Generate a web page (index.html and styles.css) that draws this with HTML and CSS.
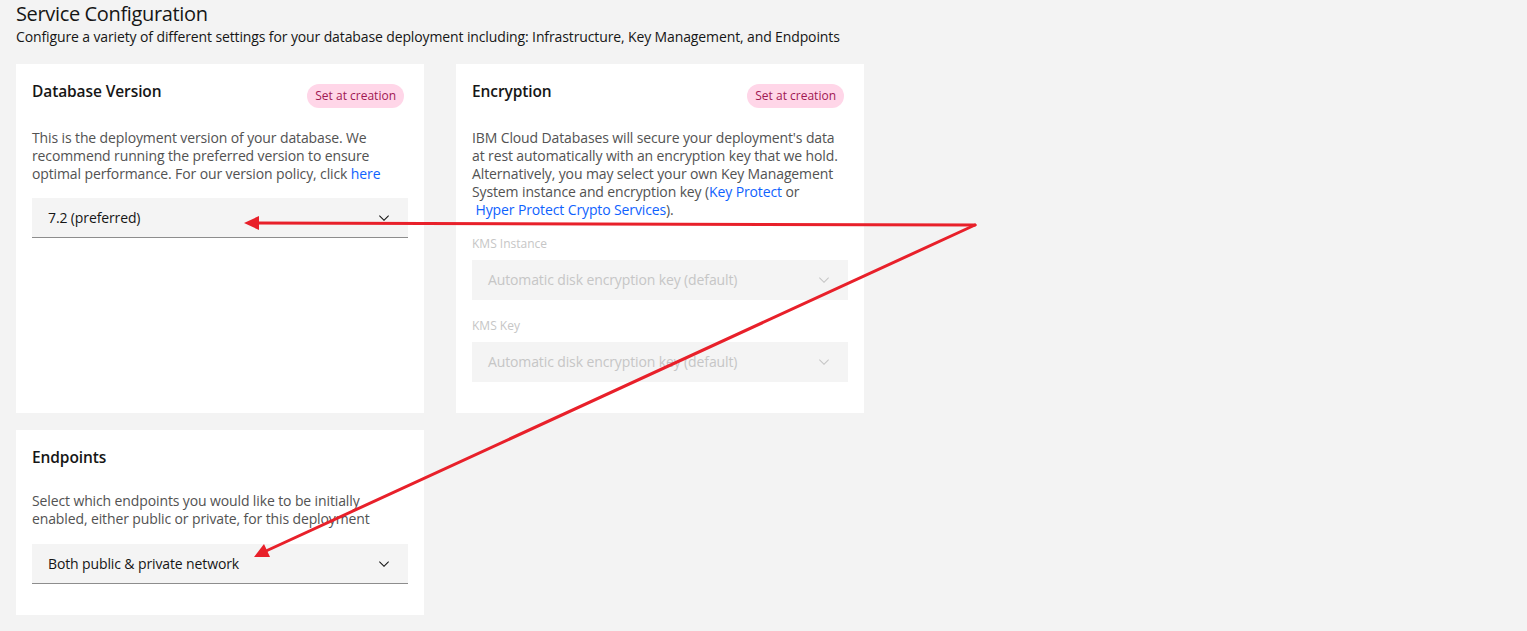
FILE: index.html
```html
<!DOCTYPE html>
<html lang="en">
<head>
<meta charset="utf-8">
<title>Service Configuration</title>
<link rel="stylesheet" href="styles.css">
</head>
<body>
<main class="page">
  <header class="page-header">
    <h1 class="page-title">Service Configuration</h1>
    <p class="page-subtitle">Configure a variety of different settings for your database deployment including: Infrastructure, Key Management, and Endpoints</p>
  </header>

  <div class="grid">
    <section class="card">
      <div class="card-head">
        <h2 class="card-title">Database Version</h2>
        <span class="tag">Set at creation</span>
      </div>
      <p class="card-desc">This is the deployment version of your database. We recommend running the preferred version to ensure optimal performance. For our version policy, click <a class="link" href="#">here</a></p>
      <div class="dropdown">
        <span class="dropdown-text">7.2 (preferred)</span>
        <svg class="chevron" viewBox="0 0 16 16" width="16" height="16"><path d="M8 11L3 6 3.7 5.3 8 9.6 12.3 5.3 13 6z"/></svg>
      </div>
    </section>

    <section class="card">
      <div class="card-head">
        <h2 class="card-title">Encryption</h2>
        <span class="tag">Set at creation</span>
      </div>
      <p class="card-desc">IBM Cloud Databases will secure your deployment's data at rest automatically with an encryption key that we hold. Alternatively, you may select your own Key Management System instance and encryption key (<a class="link" href="#">Key Protect</a> or<br><a class="link" href="#">&nbsp;Hyper Protect Crypto Services</a>).</p>
      <label class="field-label">KMS Instance</label>
      <div class="dropdown disabled">
        <span class="dropdown-text">Automatic disk encryption key (default)</span>
        <svg class="chevron" viewBox="0 0 16 16" width="16" height="16"><path d="M8 11L3 6 3.7 5.3 8 9.6 12.3 5.3 13 6z"/></svg>
      </div>
      <label class="field-label">KMS Key</label>
      <div class="dropdown disabled">
        <span class="dropdown-text">Automatic disk encryption key (default)</span>
        <svg class="chevron" viewBox="0 0 16 16" width="16" height="16"><path d="M8 11L3 6 3.7 5.3 8 9.6 12.3 5.3 13 6z"/></svg>
      </div>
    </section>

    <section class="card">
      <div class="card-head no-tag">
        <h2 class="card-title">Endpoints</h2>
      </div>
      <p class="card-desc">Select which endpoints you would like to be initially enabled, either public or private, for this deployment</p>
      <div class="dropdown">
        <span class="dropdown-text">Both public &amp; private network</span>
        <svg class="chevron" viewBox="0 0 16 16" width="16" height="16"><path d="M8 11L3 6 3.7 5.3 8 9.6 12.3 5.3 13 6z"/></svg>
      </div>
    </section>
  </div>
</main>

<svg class="annotations" width="1527" height="631" viewBox="0 0 1527 631">
  <g stroke="#e8202a" stroke-width="3" fill="none" stroke-linecap="round">
    <line x1="975" y1="225" x2="256" y2="223"/>
    <line x1="975" y1="225" x2="266" y2="551"/>
  </g>
  <g fill="#e8202a">
    <polygon points="244,223 259,216 259,230"/>
    <polygon points="254,557 264,544 270,557"/>
  </g>
</svg>
</body>
</html>
```
FILE: styles.css
```css
* { box-sizing: border-box; }

html, body {
  margin: 0;
  padding: 0;
  background: #f3f3f3;
}

body {
  font-family: "Open Sans", "Noto Sans", sans-serif;
  color: #161616;
  font-size: 14px;
  letter-spacing: -0.12px;
  position: relative;
  min-height: 631px;
}

.page {
  padding: 0 16px;
}

.page-title {
  margin: 0;
  font-size: 20px;
  line-height: 28px;
  font-weight: 400;
  letter-spacing: -0.35px;
  color: #161616;
}

.page-subtitle {
  margin: 0;
  font-size: 14px;
  line-height: 18px;
  color: #161616;
}

.grid {
  margin-top: 18px;
  display: grid;
  grid-template-columns: 408px 408px;
  column-gap: 32px;
  row-gap: 17px;
  align-items: stretch;
}

.card {
  background: #ffffff;
  padding: 16px 16px 31px;
  display: flex;
  flex-direction: column;
}

.card-head {
  display: flex;
  justify-content: space-between;
  align-items: flex-start;
  height: 24px;
}

.card-title {
  margin: 0;
  font-size: 15.5px;
  line-height: 22px;
  font-weight: 600;
  color: #161616;
  letter-spacing: -0.1px;
}

.tag {
  margin: 4px 4px 0 0;
  height: 24px;
  padding: 0 8px;
  border-radius: 12px;
  background: #ffd6e8;
  color: #9f1853;
  font-size: 12px;
  line-height: 24px;
  letter-spacing: 0;
  white-space: nowrap;
}

.card-desc {
  margin: 24px 0 0;
  padding-top: 1px;
  font-size: 14px;
  line-height: 18px;
  color: #525252;
}

.card-head.no-tag + .card-desc {
  margin-top: 21px;
  padding-bottom: 1px;
}

.link {
  color: #0f62fe;
  text-decoration: none;
}

.dropdown {
  margin-top: 15px;
  height: 40px;
  background: #f4f4f4;
  border-bottom: 1px solid #8d8d8d;
  display: flex;
  align-items: center;
  justify-content: space-between;
  padding: 0 16px;
}

.dropdown-text {
  font-size: 14px;
  color: #161616;
}

.chevron {
  fill: #161616;
  flex: none;
}

.dropdown.disabled {
  border-bottom-color: transparent;
}

.dropdown.disabled .dropdown-text {
  color: #c6c6c6;
}

.dropdown.disabled .chevron {
  fill: #c6c6c6;
}

.field-label {
  display: block;
  margin-top: 17px;
  font-size: 12px;
  line-height: 16px;
  color: #c6c6c6;
  letter-spacing: 0;
}

.dropdown + .field-label {
  margin-top: 18px;
}

.field-label + .dropdown {
  margin-top: 8px;
}

.annotations {
  position: absolute;
  left: 0;
  top: 0;
  pointer-events: none;
}
```
